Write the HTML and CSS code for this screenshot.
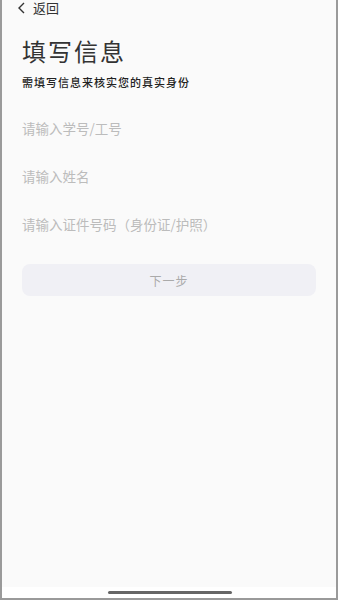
FILE: index.html
```html
<!DOCTYPE html>
<html lang="zh">
<head>
    <meta charset="UTF-8">
    <meta name="viewport" content="width=device-width, initial-scale=1.0">
    <title>填写信息</title>
    <link rel="stylesheet" href="styles.css">
</head>
<body>
    <div class="screen">
        <div class="content">
            <div class="nav">
                <svg class="back-icon" width="10" height="12" viewBox="0 0 10 12">
                    <path d="M7 1 L2 6 L7 11" fill="none" stroke="#333" stroke-width="1.4"/>
                </svg>
                <span class="back-text">返回</span>
            </div>
            <h1 class="title">填写信息</h1>
            <p class="subtitle">需填写信息来核实您的真实身份</p>
            <div class="form">
                <input type="text" class="field" placeholder="请输入学号/工号">
                <input type="text" class="field" placeholder="请输入姓名">
                <input type="text" class="field" placeholder="请输入证件号码（身份证/护照）">
            </div>
            <button type="button" class="button">下一步</button>
        </div>
        <div class="home-bar">
            <div class="home-indicator"></div>
        </div>
    </div>
</body>
</html>
```

FILE: styles.css
```css
* {
    box-sizing: border-box;
}
body {
    margin: 0;
    font-family: "Noto Sans CJK SC", "Noto Sans", sans-serif;
    background-color: #fafafa;
}
.screen {
    width: 338px;
    height: 600px;
    display: flex;
    flex-direction: column;
    border-left: 2px solid #9a9a9a;
    border-right: 2px solid #9a9a9a;
    border-bottom: 2px solid #9a9a9a;
    background-color: #fafafa;
}
.content {
    flex: 1;
    padding: 0 20px;
}
.nav {
    display: flex;
    align-items: center;
    height: 16px;
}
.back-icon {
    margin-left: -5px;
    margin-right: 6px;
}
.back-text {
    font-size: 13px;
    color: #333;
    line-height: 16px;
}
.title {
    margin: 20px 0 0;
    font-size: 24px;
    font-weight: 400;
    color: #333;
    line-height: 30px;
    letter-spacing: 2px;
}
.subtitle {
    margin: 9px 0 0;
    font-size: 11px;
    font-weight: 500;
    color: #222;
    line-height: 14px;
    letter-spacing: 1px;
}
.form {
    margin-top: 15px;
    display: flex;
    flex-direction: column;
}
.field {
    height: 48px;
    border: none;
    background: transparent;
    padding: 0;
    font-family: inherit;
    font-size: 13.5px;
    outline: none;
}
.field::placeholder {
    color: #bcbcbc;
}
.button {
    display: block;
    width: 294px;
    height: 32px;
    margin-top: 16px;
    border: none;
    border-radius: 8px;
    background-color: #f0f0f5;
    color: #aaa;
    font-family: inherit;
    font-size: 12px;
    letter-spacing: 1px;
}
.home-bar {
    height: 11px;
    background-color: #fff;
    display: flex;
    justify-content: center;
    align-items: center;
}
.home-indicator {
    width: 124px;
    height: 3px;
    border-radius: 2px;
    background-color: #666;
    margin-left: 2px;
}
```
